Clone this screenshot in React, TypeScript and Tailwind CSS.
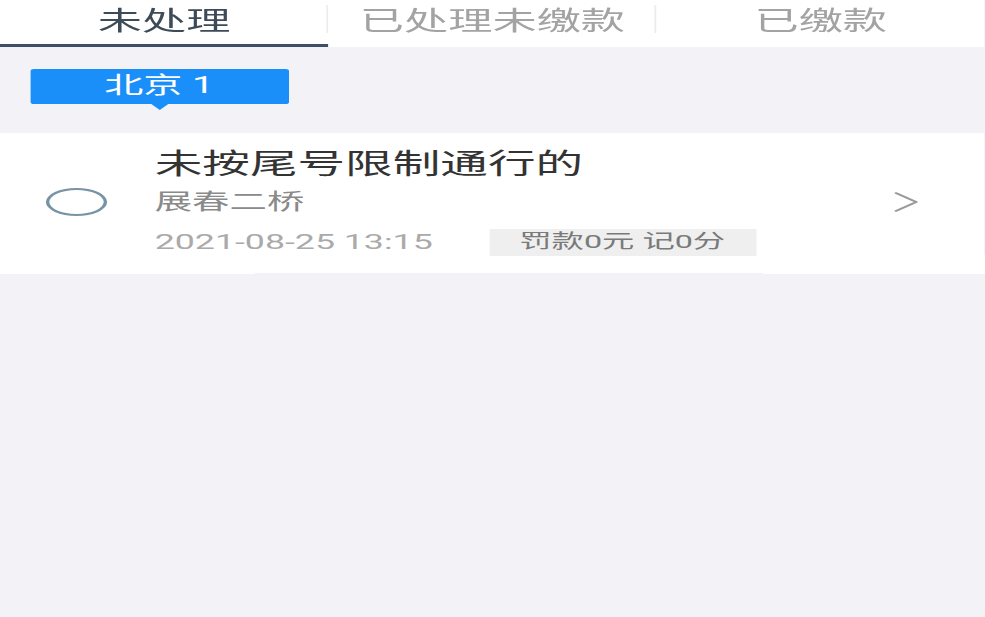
const tabs = ['未处理', '已处理未缴款', '已缴款'];

const font = { fontFamily: 'Roboto, "Noto Sans CJK SC", sans-serif' };

const App = () => {
  return (
    <div className="min-h-[617px] w-[985px] overflow-hidden bg-[#f3f3f7]">
      {/* phone screenshot is stretched sideways, so the whole view is drawn narrow and widened */}
      <div className="w-[579.4px] origin-top-left scale-x-[1.7]" style={font}>
        <div className="flex h-[47px] bg-white">
          {tabs.map((tab, i) => (
            <div key={tab} className="relative flex flex-1 items-center justify-center">
              <span
                className={`text-[26px] leading-none pb-[6px] ${
                  i === 0 ? 'text-[#3d4a57]' : 'text-[#a3a3a3]'
                }`}
              >
                {tab}
              </span>
              {i < tabs.length - 1 && (
                <div className="absolute right-0 top-[5px] h-[28px] w-px bg-[#ececec]" />
              )}
              {i === 0 && (
                <div className="absolute bottom-0 left-0 right-0 h-[3px] bg-[#3e5068]" />
              )}
            </div>
          ))}
        </div>

        <div className="pl-[17.6px] pt-[22px] pb-[23px]">
          <div className="relative w-[152px]">
            <div className="flex h-[35px] items-center justify-center rounded-[2px] bg-[#1a8ffa] text-[23px] text-white">
              北京 1
            </div>
            <div className="mx-auto h-0 w-0 border-l-[5px] border-r-[5px] border-t-[6px] border-l-transparent border-r-transparent border-t-[#1a8ffa]" />
          </div>
        </div>

        <div className="flex items-center bg-white pl-[27px] pr-[38px] pt-[14px] pb-[17px]">
          <div className="h-[28px] w-[36px] rounded-[50%] border-2 border-[#7793a6]" />
          <div className="ml-[28px] flex flex-1 flex-col">
            <div className="text-[28px] leading-[36px] text-[#333333]">未按尾号限制通行的</div>
            <div className="mt-[4px] text-[22px] leading-[30px] text-[#8a8a8a]">展春二桥</div>
            <div className="mt-[12px] flex items-center">
              <span className="text-[21px] leading-none text-[#aaaaaa]">2021-08-25 13:15</span>
              <span className="ml-[33px] flex h-[27px] w-[157px] items-center justify-center bg-[#efefef] text-[19px] text-[#7a7a7a]">
                罚款0元 记0分
              </span>
            </div>
          </div>
          <svg width="16" height="22" viewBox="0 0 16 22" fill="none" className="text-[#9a9a9a]">
            <polyline points="2,2 14,11 2,20" stroke="currentColor" strokeWidth="1.6" strokeLinecap="round" strokeLinejoin="round" />
          </svg>
        </div>
      </div>
    </div>
  );
};

export default App;
